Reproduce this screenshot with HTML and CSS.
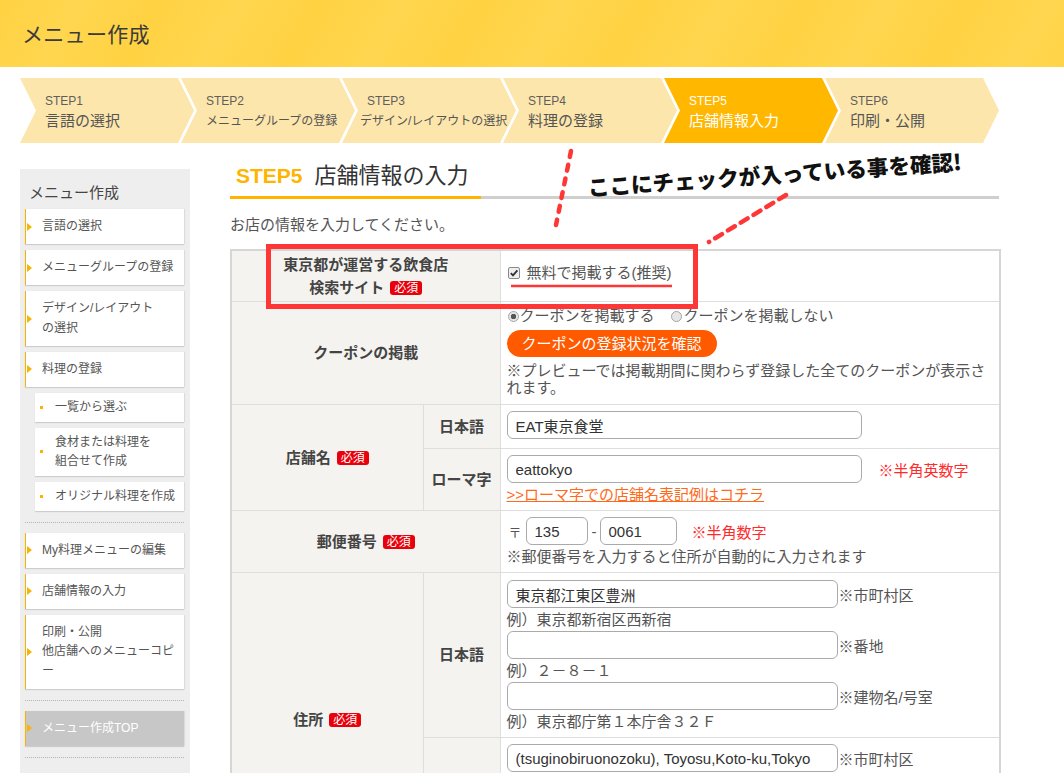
FILE: index.html
```html
<!DOCTYPE html>
<html lang="ja">
<head>
<meta charset="utf-8">
<title>メニュー作成</title>
<link rel="stylesheet" href="styles.css">
</head>
<body>
<header class="hdr"><h1 class="hdr-title">メニュー作成</h1></header>

<nav class="steps">
  <div class="step"><span class="step-no">STEP1</span><span class="step-name">言語の選択</span></div>
  <div class="step small"><span class="step-no">STEP2</span><span class="step-name">メニューグループの登録</span></div>
  <div class="step small shift"><span class="step-no">STEP3</span><span class="step-name">デザイン/レイアウトの選択</span></div>
  <div class="step"><span class="step-no">STEP4</span><span class="step-name">料理の登録</span></div>
  <div class="step active"><span class="step-no">STEP5</span><span class="step-name">店舗情報入力</span></div>
  <div class="step"><span class="step-no">STEP6</span><span class="step-name">印刷・公開</span></div>
</nav>

<div class="wrap">
  <aside class="side">
    <div class="side-title">メニュー作成</div>
    <ul class="side-list">
      <li class="si"><span>言語の選択</span></li>
      <li class="si"><span>メニューグループの登録</span></li>
      <li class="si"><span>デザイン/レイアウト<br>の選択</span></li>
      <li class="si"><span>料理の登録</span></li>
      <li class="ssi"><span>一覧から選ぶ</span></li>
      <li class="ssi"><span>食材または料理を<br>組合せて作成</span></li>
      <li class="ssi"><span>オリジナル料理を作成</span></li>
      <li class="sep"></li>
      <li class="si"><span>My料理メニューの編集</span></li>
      <li class="si"><span>店舗情報の入力</span></li>
      <li class="si"><span>印刷・公開<br>他店舗へのメニューコピ<br>ー</span></li>
      <li class="sep"></li>
      <li class="si top"><span>メニュー作成TOP</span></li>
      <li class="sep"></li>
    </ul>
  </aside>

  <main class="main">
    <h2 class="ttl"><span class="ttl-in"><span class="ttl-step">STEP5</span>店舗情報の入力</span></h2>
    <p class="intro">お店の情報を入力してください。</p>

    <table class="form">
      <colgroup><col class="c1"><col class="c2"><col class="c3"></colgroup>
      <tr class="r1">
        <th colspan="2" class="lbl2">東京都が運営する飲食店<br>検索サイト <span class="req">必須</span></th>
        <td class="v-mid">
          <label class="chk"><span class="box"><svg width="10" height="10" viewBox="0 0 10 10"><path d="M1.8 5.2 L4 7.4 L8.4 2.4" fill="none" stroke="#333" stroke-width="1.9"/></svg></span>無料で掲載する(推奨)</label>
        </td>
      </tr>
      <tr>
        <th colspan="2">クーポンの掲載</th>
        <td class="v-coupon">
          <div class="radios"><span class="radio on"></span>クーポンを掲載する<span class="radio second"></span>クーポンを掲載しない</div>
          <button class="pill" type="button">クーポンの登録状況を確認</button>
          <p class="note">※プレビューでは掲載期間に関わらず登録した全てのクーポンが表示されます。</p>
        </td>
      </tr>
      <tr>
        <th rowspan="2">店舗名 <span class="req">必須</span></th>
        <th>日本語</th>
        <td class="v-name"><input class="txt w355" type="text" value="EAT東京食堂"></td>
      </tr>
      <tr>
        <th>ローマ字</th>
        <td class="v-std">
          <div class="fld"><input class="txt w355" type="text" value="eattokyo"><span class="warn w1">※半角英数字</span></div>
          <a class="link" href="#">&gt;&gt;ローマ字での店舗名表記例はコチラ</a>
        </td>
      </tr>
      <tr>
        <th colspan="2">郵便番号 <span class="req">必須</span></th>
        <td class="v-std">
          <div class="fld"><span class="zip">〒</span><input class="txt w62" type="text" value="135"><span class="dash">-</span><input class="txt w77" type="text" value="0061"><span class="warn w2">※半角数字</span></div>
          <div class="ex">※郵便番号を入力すると住所が自動的に入力されます</div>
        </td>
      </tr>
      <tr>
        <th rowspan="2">住所 <span class="req">必須</span></th>
        <th>日本語</th>
        <td class="v-addr">
          <div class="fld"><input class="txt w331" type="text" value="東京都江東区豊洲"><span class="sfx">※市町村区</span></div>
          <div class="ex">例）東京都新宿区西新宿</div>
          <div class="fld f2"><input class="txt w331" type="text" value=""><span class="sfx">※番地</span></div>
          <div class="ex">例）２－８－１</div>
          <div class="fld f2"><input class="txt w331" type="text" value=""><span class="sfx">※建物名/号室</span></div>
          <div class="ex">例）東京都庁第１本庁舎３２Ｆ</div>
        </td>
      </tr>
      <tr class="r5b">
        <th>英語</th>
        <td class="v-std">
          <div class="fld"><input class="txt w331" type="text" value="(tsuginobiruonozoku), Toyosu,Koto-ku,Tokyo"><span class="sfx">※市町村区</span></div>
          <div class="ex">例）Nishishinjuku,Shinjuku-ku,Tokyo</div>
          <div class="fld f2"><input class="txt w331" type="text" value="6-5-1"><span class="sfx">※番地</span></div>
        </td>
      </tr>
    </table>
  </main>
</div>

<svg class="overlay" width="1064" height="773" viewBox="0 0 1064 773">
  <rect x="268.5" y="246.5" width="427" height="60" fill="none" stroke="#ff3636" stroke-width="5"/>
  <line x1="511" y1="286" x2="672" y2="286" stroke="#ff3636" stroke-width="2.5"/>
  <line x1="571" y1="151" x2="556" y2="225" stroke="#ff3636" stroke-width="4.5" stroke-dasharray="6 8" stroke-linecap="round"/>
  <line x1="786" y1="195" x2="709" y2="242" stroke="#ff3636" stroke-width="4.5" stroke-dasharray="8 7" stroke-linecap="round"/>
</svg>
<div class="annot">ここにチェックが入っている事を確認!</div>
</body>
</html>
```

FILE: styles.css
```css
* { box-sizing: border-box; }
html { overflow: hidden; }
body {
  margin: 0;
  font-family: "Liberation Sans", "Noto Sans CJK JP", sans-serif;
  color: #555;
  background: #fff;
  position: relative;
  min-height: 773px;
  overflow: hidden;
}

/* header */
.hdr {
  height: 67px;
  background: repeating-linear-gradient(120deg, #ffd242 0px, #ffd64f 70px, #ffd242 140px);
  display: flex;
  align-items: center;
  padding: 0 0 1px 22px;
}
.hdr-title {
  margin: 0;
  font-size: 21px;
  font-weight: normal;
  color: #3b3b3b;
  letter-spacing: 0.3px;
}

/* steps */
.steps {
  display: flex;
  margin: 11px 0 0 20px;
  height: 65px;
}
.step {
  flex: none;
  width: 174px;
  height: 65px;
  margin-right: -13px;
  background: #fde6ab;
  clip-path: polygon(0 0, 158px 0, 174px 50%, 158px 100%, 0 100%, 16px 50%);
  padding: 14px 0 0 25px;
  display: flex;
  flex-direction: column;
}
.step-no { font-size: 12px; line-height: 18px; color: #5f5f5f; }
.step-name { font-size: 15px; line-height: 22px; color: #555; white-space: nowrap; }
.step.small .step-name { font-size: 12px; }
.step.shift .step-name { margin-left: -7px; }
.step.active { background: #ffb700; }
.step.active .step-no,
.step.active .step-name { color: #fff; }

/* layout */
.wrap {
  display: flex;
  align-items: flex-start;
}

/* sidebar */
.side {
  flex: none;
  width: 170px;
  margin: 26px 0 0 20px;
  background: #eeeeee;
  padding: 12px 6px 60px 5px;
}
.side-title {
  font-size: 15px;
  line-height: 24px;
  padding-left: 4px;
  color: #444;
}
.side-list {
  list-style: none;
  margin: 4px 0 0;
  padding: 0;
  display: flex;
  flex-direction: column;
  gap: 6px;
}
.si {
  display: flex;
  align-items: center;
  background: #fff;
  border-left: 1.5px solid #f5b400;
  box-shadow: 0 1px 1px rgba(0, 0, 0, 0.13), 1px 0 1px rgba(0, 0, 0, 0.06);
  padding: 8px 6px 7.5px 1px;
  font-size: 12px;
  line-height: 19.5px;
  color: #555;
}
.si::before {
  content: "";
  flex: none;
  width: 0;
  height: 0;
  border-left: 5px solid #f7b500;
  border-top: 4px solid transparent;
  border-bottom: 4px solid transparent;
  margin-right: 10px;
}
.si.top { background: #c7c7c7; color: #fff; }
.ssi {
  display: flex;
  align-items: center;
  margin-left: 10px;
  background: #fff;
  box-shadow: 0 1px 1px rgba(0, 0, 0, 0.13), 1px 0 1px rgba(0, 0, 0, 0.06);
  padding: 5px 6px 5px 5px;
  font-size: 12px;
  line-height: 19px;
  color: #555;
}
.ssi::before {
  content: "";
  flex: none;
  width: 3px;
  height: 3px;
  background: #f7b500;
  margin-right: 12px;
}
.sep {
  height: 0;
  border-top: 1px dotted #b5b5b5;
  margin: 5px 0 4px;
}

/* main */
.main {
  flex: none;
  width: 769px;
  margin-left: 40px;
  padding-top: 17px;
}
.ttl {
  margin: 0;
  font-weight: normal;
  border-bottom: 3px solid #cfcfcf;
  height: 39px;
}
.ttl-in {
  display: inline-block;
  height: 39px;
  padding: 0 12px 0 6px;
  border-bottom: 3px solid #ffb400;
  font-size: 22px;
  line-height: 32px;
  color: #333;
}
.ttl-step {
  color: #ffb400;
  font-weight: bold;
  font-size: 21px;
  margin-right: 12px;
}
.intro {
  margin: 14px 0 12px;
  font-size: 15px;
  line-height: 24px;
  color: #555;
}

/* form table */
.form {
  width: 769px;
  border-collapse: collapse;
  table-layout: fixed;
  border: 2px solid #d6d6d6;
  font-size: 15px;
}
.c1 { width: 192px; }
.c2 { width: 77px; }
.c3 { width: 500px; }
.form th,
.form td { border: 1px solid #dedede; }
.form th {
  background: #f4f3ef;
  color: #444;
  font-weight: bold;
  text-align: center;
  vertical-align: middle;
  padding: 0;
  line-height: 22px;
}
.form td {
  background: #fff;
  vertical-align: top;
  color: #555;
}
.lbl2 { line-height: 23px !important; padding: 2px 0 !important; }
.req {
  display: inline-block;
  background: #e8000b;
  color: #fff;
  font-size: 12px;
  font-weight: normal;
  line-height: 14px;
  padding: 0 4px;
  border-radius: 3px;
  margin-left: 2px;
  vertical-align: 1px;
}

.v-mid { vertical-align: middle !important; padding: 0 6px 6px; }
.chk { display: flex; align-items: center; line-height: 22px; }
.box {
  width: 12px;
  height: 12px;
  border: 1px solid #8a8a8a;
  border-radius: 2px;
  background: #efefef;
  display: inline-flex;
  align-items: center;
  justify-content: center;
  margin: 0 7px 0 1px;
}

.v-coupon { padding: 4px 6px 8px; }
.radios { line-height: 20px; display: flex; align-items: center; }
.radio {
  flex: none;
  width: 11px;
  height: 11px;
  border-radius: 50%;
  border: 1px solid #a5a5a5;
  background: #e6e6e6;
  margin: 0 1px 0 1px;
}
.radio.on { background: radial-gradient(circle, #555 0 2.5px, #e6e6e6 3px); }
.radio.second { margin-left: 16px; margin-right: 2px; }
.pill {
  display: block;
  width: 210px;
  height: 27px;
  margin: 4px 0 0 0;
  padding: 0;
  border: 0;
  border-radius: 14px;
  background: #ff5a00;
  color: #fff;
  font: 15px/27px "Liberation Sans", "Noto Sans CJK JP", sans-serif;
}
.note { margin: 5px 0 0; line-height: 17px; }

.v-name { padding: 6px 6px 9px; }
.v-std { padding: 6px 6px 5px; }
.v-addr { padding: 7px 6px 5px; }
.fld { display: flex; align-items: center; }
.f2 { margin-top: 1px; }
.txt {
  height: 28px;
  margin: 0;
  border: 1px solid #aaa;
  border-radius: 6px;
  padding: 0 8px;
  font: 15px "Liberation Sans", "Noto Sans CJK JP", sans-serif;
  color: #333;
  background: #fff;
  outline: none;
}
.w355 { width: 355px; }
.w331 { width: 331px; }
.w62 { width: 62px; }
.w77 { width: 77px; }
.warn { color: #ff2a2a; }
.w1 { margin-left: 17px; }
.w2 { margin-left: 15px; }
.zip { font-size: 13px; margin: 0 4px 0 2px; }
.dash { margin: 0 3px 0 4px; }
.sfx { margin-left: 1px; }
.link {
  display: block;
  margin-top: 2px;
  line-height: 20px;
  color: #ff6a1a;
  text-decoration: underline;
}
.ex { margin-top: 2px; line-height: 20px; }
.r5b td { height: 131px; }

/* annotation overlay */
.overlay {
  position: absolute;
  left: 0;
  top: 0;
  pointer-events: none;
}
.annot {
  position: absolute;
  left: 587px;
  top: 176px;
  font-family: "Noto Sans CJK JP", sans-serif;
  font-weight: 900;
  font-size: 21.6px;
  line-height: 22px;
  color: #111;
  white-space: nowrap;
  transform: rotate(-4deg);
  transform-origin: left top;
}
```
